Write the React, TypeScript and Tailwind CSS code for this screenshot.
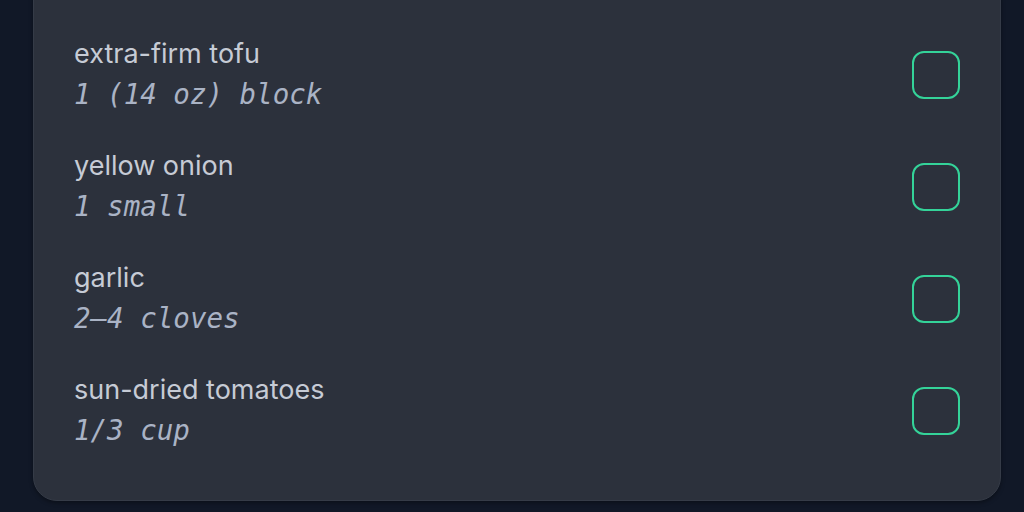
const ingredients = [
  { name: "extra-firm tofu", qty: "1 (14 oz) block" },
  { name: "yellow onion", qty: "1 small" },
  { name: "garlic", qty: "2–4 cloves" },
  { name: "sun-dried tomatoes", qty: "1/3 cup" },
];

export default function App() {
  return (
    <div className="h-[512px] overflow-hidden bg-[#111827] pb-3 font-['Inter',sans-serif]">
      <div className="-mt-6 ml-[33px] w-[968px] rounded-3xl border border-[#353b47] bg-[#2c313c] px-10 pb-[52px] pt-[63px] shadow-[0_2px_4px_rgba(0,0,0,0.35)]">
        <ul className="flex flex-col gap-10">
          {ingredients.map((item) => (
            <li key={item.name} className="flex items-center justify-between">
              <div>
                <p className="-mt-0.5 pb-0.5 text-[27px] leading-8 text-[#c6cbd5]">{item.name}</p>
                <p className="mt-1 font-['DejaVu_Sans_Mono',monospace] text-[27.5px] italic leading-9 text-[#aab3c5]">
                  {item.qty}
                </p>
              </div>
              <button
                aria-label={`check ${item.name}`}
                className="-mt-0.5 h-12 w-12 rounded-xl border-2 border-[#34d399] bg-transparent"
              />
            </li>
          ))}
        </ul>
      </div>
    </div>
  );
}
